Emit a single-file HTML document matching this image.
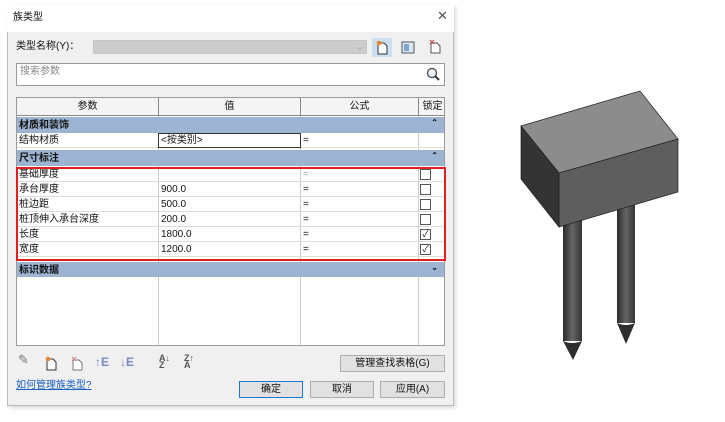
<!DOCTYPE html>
<html><head><meta charset="utf-8"><style>
*{margin:0;padding:0;box-sizing:border-box}
body{width:725px;height:422px;background:#fff;position:relative;overflow:hidden;font-family:"Liberation Sans","Noto Sans CJK SC",sans-serif;font-size:10px;line-height:12px;color:#111}
.a{position:absolute}
.dlg{left:7px;top:5px;width:447px;height:401px;background:#f0f0f0;border:1px solid #bbb;box-shadow:2px 2px 4px rgba(0,0,0,.15)}
.tb{left:7px;top:5px;width:447px;height:27px;background:#fff}
.tbl{left:16px;top:97px;width:429px;height:249px;background:#fff;border:1px solid #9a9a9a}
.vl{position:absolute;top:0;bottom:0;width:1px;background:#ccc}
.hd{position:absolute;left:0;right:0;top:0;height:18px;background:#f4f4f4;border-bottom:1px solid #888;line-height:18px}
.hd span{position:absolute;top:0;text-align:center}
.grp{position:absolute;left:0;right:0;height:16px;background:#9cb4d2;font-weight:bold;padding:0 0 0 2px;line-height:17px;color:#111}
.grp i{position:absolute;right:6px;top:-3px;font-style:normal;font-size:8px}
.row{position:absolute;left:0;right:0;height:15px;border-bottom:1px solid #ddd;background:#fff;line-height:16px}
.row span{position:absolute;top:0}
.cb{position:absolute;left:403px;top:2px;width:11px;height:11px;border:1px solid #555;background:#fff;font-size:9px;line-height:9px;text-align:center}
.btn{position:absolute;height:17px;background:#e1e1e1;border:1px solid #adadad;text-align:center;line-height:15px;font-size:10px}
</style></head><body>
<div class="a dlg"></div>
<div class="a tb"></div>
<div class="a" style="left:13px;top:12px;font-size:10px">族类型</div>
<div class="a" style="left:437px;top:9px;font-size:13px;line-height:14px;color:#555">✕</div>
<div class="a" style="left:16px;top:41px;font-size:10px">类型名称(Y)：</div>
<div class="a" style="left:93px;top:40px;width:274px;height:14px;background:#ccc;border:1px solid #c4c4c4"></div>
<div class="a" style="left:357px;top:42px;font-size:8px;color:#999">⌵</div>
<div class="a" style="left:372px;top:38px;width:20px;height:19px;background:#cce0f2"></div>
<svg class="a" style="left:375px;top:40px" width="14" height="15"><path d="M3 3h6l3 3v8H3z" fill="#fff" stroke="#333"/><circle cx="4" cy="3" r="2.3" fill="#e98a2b"/></svg>
<svg class="a" style="left:401px;top:41px" width="14" height="13"><rect x="1" y="1" width="12" height="11" fill="#dde8f3" stroke="#555"/><rect x="3" y="3" width="5" height="7" fill="#7fa7d6"/></svg>
<svg class="a" style="left:428px;top:39px" width="14" height="15"><path d="M3 4h6l3 3v7H3z" fill="#fff" stroke="#555"/><path d="M2 1l4 4M6 1L2 5" stroke="#c44" stroke-width="1"/></svg>
<div class="a" style="left:16px;top:63px;width:429px;height:23px;background:#fff;border:1px solid #999"></div>
<div class="a" style="left:20px;top:66px;color:#888">搜索参数</div>
<svg class="a" style="left:426px;top:67px" width="14" height="15"><circle cx="6" cy="6" r="4.5" fill="#e8f0f8" stroke="#444" stroke-width="1.3"/><path d="M9 9l4 4" stroke="#333" stroke-width="2"/></svg>
<div class="a tbl">
 <div class="vl" style="left:141px"></div><div class="vl" style="left:283px"></div><div class="vl" style="left:401px"></div>
 <div class="hd"><span style="left:0;width:141px">参数</span><span style="left:142px;width:141px">值</span><span style="left:284px;width:117px">公式</span><span style="left:402px;width:27px">锁定</span>
 <div class="vl" style="left:141px;background:#888"></div><div class="vl" style="left:283px;background:#888"></div><div class="vl" style="left:401px;background:#888"></div></div>
 <div class="grp" style="top:19px">材质和装饰<i>⌃</i></div>
 <div class="row" style="top:35px"><span style="left:2px">结构材质</span><div style="position:absolute;left:141px;top:0;width:143px;height:15px;border:1px solid #333;background:#fff;padding:0 2px;line-height:14px">&lt;按类别&gt;</div><span style="left:286px">=</span><div class="vl" style="left:401px"></div></div>
 <div class="grp" style="top:52px">尺寸标注<i>⌃</i></div>
 <div class="row" style="top:69px"><span style="left:2px">基础厚度</span><span style="left:286px;color:#aaa">=</span><div class="vl" style="left:141px"></div><div class="vl" style="left:283px"></div><div class="vl" style="left:401px"></div><div class="cb"></div></div>
 <div class="row" style="top:84px"><span style="left:2px">承台厚度</span><span style="left:144px">900.0</span><span style="left:286px">=</span><div class="vl" style="left:141px"></div><div class="vl" style="left:283px"></div><div class="vl" style="left:401px"></div><div class="cb"></div></div>
 <div class="row" style="top:99px"><span style="left:2px">桩边距</span><span style="left:144px">500.0</span><span style="left:286px">=</span><div class="vl" style="left:141px"></div><div class="vl" style="left:283px"></div><div class="vl" style="left:401px"></div><div class="cb"></div></div>
 <div class="row" style="top:114px"><span style="left:2px">桩顶伸入承台深度</span><span style="left:144px">200.0</span><span style="left:286px">=</span><div class="vl" style="left:141px"></div><div class="vl" style="left:283px"></div><div class="vl" style="left:401px"></div><div class="cb"></div></div>
 <div class="row" style="top:129px"><span style="left:2px">长度</span><span style="left:144px">1800.0</span><span style="left:286px">=</span><div class="vl" style="left:141px"></div><div class="vl" style="left:283px"></div><div class="vl" style="left:401px"></div><div class="cb">✓</div></div>
 <div class="row" style="top:144px"><span style="left:2px">宽度</span><span style="left:144px">1200.0</span><span style="left:286px">=</span><div class="vl" style="left:141px"></div><div class="vl" style="left:283px"></div><div class="vl" style="left:401px"></div><div class="cb">✓</div></div>
 <div class="grp" style="top:164px;height:15px">标识数据<i>⌄</i></div>
</div>
<div class="a" style="left:16px;top:167px;width:430px;height:94px;border:2px solid #e02020"></div>
<div class="a" style="left:18px;top:353px;font-size:13px;line-height:14px;color:#777">✎</div>
<svg class="a" style="left:44px;top:356px" width="14" height="15"><path d="M3 3h6l3 3v8H3z" fill="#fff" stroke="#333"/><circle cx="4" cy="3" r="2.3" fill="#e98a2b"/></svg>
<svg class="a" style="left:70px;top:356px" width="14" height="15"><path d="M3 4h6l3 3v7H3z" fill="#fff" stroke="#777"/><path d="M2 1l4 4M6 1L2 5" stroke="#c88" stroke-width="1"/></svg>
<div class="a" style="left:95px;top:356px;font-size:12px;line-height:13px;color:#7a88c8;font-weight:bold">↑E</div>
<div class="a" style="left:120px;top:356px;font-size:12px;line-height:13px;color:#7a88c8;font-weight:bold">↓E</div>
<div class="a" style="left:159px;top:355px;font-size:9px;line-height:7px;color:#555;font-weight:bold">A↓<br>Z</div>
<div class="a" style="left:184px;top:355px;font-size:9px;line-height:7px;color:#555;font-weight:bold">Z↑<br>A</div>
<div class="btn" style="left:340px;top:355px;width:105px">管理查找表格(G)</div>
<div class="a" style="left:16px;top:380px;color:#1a5fc4;text-decoration:underline">如何管理族类型?</div>
<div class="btn" style="left:239px;top:381px;width:64px;border:1px solid #1a7ad6">确定</div>
<div class="btn" style="left:310px;top:381px;width:64px">取消</div>
<div class="btn" style="left:380px;top:381px;width:65px">应用(A)</div>
<svg class="a" style="left:500px;top:80px" width="200" height="300" viewBox="500 80 200 300">
<defs><linearGradient id="p" x1="0" x2="1"><stop offset="0" stop-color="#2a2a2a"/><stop offset=".5" stop-color="#666"/><stop offset="1" stop-color="#333"/></linearGradient></defs>
<rect x="563" y="215" width="19" height="126" fill="url(#p)"/>
<path d="M563 341q9 4 19 0l-9 19z" fill="#2e2e2e"/>
<rect x="617" y="185" width="18" height="138" fill="url(#p)"/>
<path d="M617 323q9 4 18 0l-9 21z" fill="#2e2e2e"/>
<path d="M521 126L640 91 678 139 559 173z" fill="#8c8c8c" stroke="#222" stroke-width=".7"/>
<path d="M559 173L678 139 678 192 559 227z" fill="#5e5e5e" stroke="#222" stroke-width=".7"/>
<path d="M521 126L559 173 559 227 521 179z" fill="#343434" stroke="#222" stroke-width=".7"/>
</svg>
</body></html>
